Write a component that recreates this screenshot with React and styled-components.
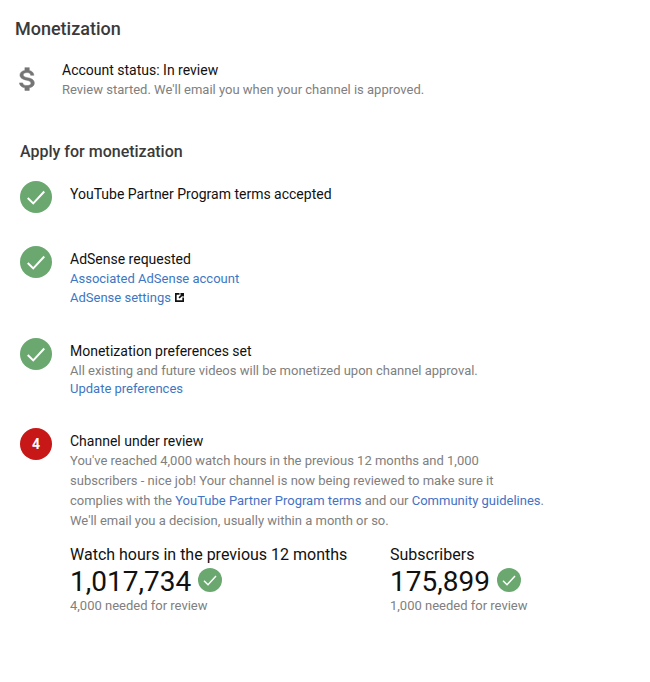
import React from 'react'
import styled, { createGlobalStyle } from 'styled-components'

const GlobalStyle = createGlobalStyle`
  html, body {
    margin: 0;
    padding: 0;
    background: #fff;
    font-family: Roboto, "Liberation Sans", sans-serif;
  }
`

const Page = styled.div`
  width: 650px;
  height: 682px;
  padding: 17px 0 0 15px;
  box-sizing: border-box;
  overflow: hidden;
`
const Title = styled.h1`
  margin: 0;
  font-size: 18px;
  line-height: 24px;
  font-weight: 500;
  color: #3a3a3a;
`
const StatusRow = styled.div`
  display: flex;
  margin-top: 19px;
`
const StatusIcon = styled.div`
  width: 47px;
  flex: none;
  padding: 6px 0 0 1px;
  box-sizing: border-box;
`
const StatusTitle = styled.div`
  font-size: 14px;
  line-height: 20px;
  color: #111;
`
const Muted = styled.div`
  font-size: 13px;
  line-height: ${p => p.$lh || 19}px;
  color: #808080;
`
const SubTitle = styled.h2`
  margin: 41px 0 0 5px;
  font-size: 16px;
  line-height: 22px;
  font-weight: 500;
  color: #3a3a3a;
`
const Steps = styled.div`
  margin: 18px 0 0 5px;
  display: flex;
  flex-direction: column;
`
const Step = styled.div`
  display: flex;
  min-height: ${p => p.$h}px;
`
const Badge = styled.div`
  width: 32px;
  height: 32px;
  flex: none;
  margin-right: 18px;
  border-radius: 50%;
  background: ${p => p.$bg};
  color: #fff;
  display: flex;
  align-items: center;
  justify-content: center;
  font-size: 14px;
  font-weight: 700;
`
const StepBody = styled.div`
  padding-top: 3px;
`
const StepTitle = styled.div`
  font-size: 14px;
  line-height: 20px;
  color: #111;
`
const StepLink = styled.a`
  display: block;
  font-size: 13px;
  line-height: ${p => p.$lh || 19}px;
  color: #3d77c4;
`
const Inline = styled.span`
  color: #4472c4;
`
const External = styled.svg`
  width: 11px;
  height: 11px;
  margin-left: 3px;
  vertical-align: -1px;
`
const Stats = styled.div`
  display: flex;
  margin-top: 13px;
`
const Stat = styled.div`
  width: ${p => p.$w}px;
  flex: none;
`
const StatLabel = styled.div`
  font-size: 16px;
  line-height: 22px;
  color: #111;
`
const StatValue = styled.div`
  display: flex;
  align-items: center;
  font-size: 28px;
  line-height: 31px;
  color: #111;
`
const SmallCheck = styled.div`
  width: 24px;
  height: 24px;
  margin: -4px 0 0 7px;
  border-radius: 50%;
  background: #6aa870;
  display: flex;
  align-items: center;
  justify-content: center;
`

const Check = ({ size }) => (
  <svg width={size} height={size} viewBox="0 0 24 24" fill="none" stroke="#fff" strokeWidth="2.2">
    <path d="M3 13l6 6L21 6" />
  </svg>
)

const App = () => (
  <Page>
    <GlobalStyle />
    <Title>Monetization</Title>
    <StatusRow>
      <StatusIcon>
        <svg width="22" height="26" viewBox="0 0 24 32" fill="#757575" stroke="#757575" strokeWidth="0.6" preserveAspectRatio="none">
          <path d="M12.6 14.4c-3.6-.9-4.800-1.900-4.800-3.400 0-1.700 1.600-2.900 4.300-2.900 2.800 0 3.800 1.300 3.900 3.300h3.500c-.1-2.700-1.800-5.200-5-6V2h-4.800v3.400C6.600 6 4.300 8 4.300 11c0 3.600 3 5.400 7.300 6.500 3.900.9 4.700 2.300 4.700 3.800 0 1.100-.8 2.800-4.300 2.800-3.200 0-4.500-1.400-4.700-3.300H3.800c.2 3.500 2.800 5.400 5.900 6.100V30h4.800v-3.300c3.100-.6 5.500-2.400 5.500-5.600 0-4.500-3.800-6-7.400-6.700z" />
        </svg>
      </StatusIcon>
      <div>
        <StatusTitle>Account status: In review</StatusTitle>
        <Muted $lh={20}>Review started. We'll email you when your channel is approved.</Muted>
      </div>
    </StatusRow>
    <SubTitle>Apply for monetization</SubTitle>
    <Steps>
      <Step $h={65}>
        <Badge $bg="#6aa870"><Check size={22} /></Badge>
        <StepBody>
          <StepTitle>YouTube Partner Program terms accepted</StepTitle>
        </StepBody>
      </Step>
      <Step $h={92}>
        <Badge $bg="#6aa870"><Check size={22} /></Badge>
        <StepBody>
          <StepTitle>AdSense requested</StepTitle>
          <StepLink>Associated AdSense account</StepLink>
          <StepLink $lh={20}>
            AdSense settings
            <External viewBox="0 0 24 24" fill="none" stroke="#111" strokeWidth="3.6">
              <path d="M12 4H4v16h16v-8M11 13l8-8M14 4h6v6" />
            </External>
          </StepLink>
        </StepBody>
      </Step>
      <Step $h={90}>
        <Badge $bg="#6aa870"><Check size={22} /></Badge>
        <StepBody>
          <StepTitle>Monetization preferences set</StepTitle>
          <Muted>All existing and future videos will be monetized upon channel approval.</Muted>
          <StepLink $lh={17}>Update preferences</StepLink>
        </StepBody>
      </Step>
      <Step $h={190}>
        <Badge $bg="#c71717">4</Badge>
        <StepBody>
          <StepTitle>Channel under review</StepTitle>
          <Muted $lh={20}>
            You've reached 4,000 watch hours in the previous 12 months and 1,000<br />
            subscribers - nice job! Your channel is now being reviewed to make sure it<br />
            complies with the <Inline>YouTube Partner Program terms</Inline> and our <Inline>Community guidelines</Inline>.<br />
            We'll email you a decision, usually within a month or so.
          </Muted>
          <Stats>
            <Stat $w={320}>
              <StatLabel>Watch hours in the previous 12 months</StatLabel>
              <StatValue>1,017,734<SmallCheck><Check size={16} /></SmallCheck></StatValue>
              <Muted $lh={18}>4,000 needed for review</Muted>
            </Stat>
            <Stat $w={180}>
              <StatLabel>Subscribers</StatLabel>
              <StatValue>175,899<SmallCheck><Check size={16} /></SmallCheck></StatValue>
              <Muted $lh={18}>1,000 needed for review</Muted>
            </Stat>
          </Stats>
        </StepBody>
      </Step>
    </Steps>
  </Page>
)

export default App
